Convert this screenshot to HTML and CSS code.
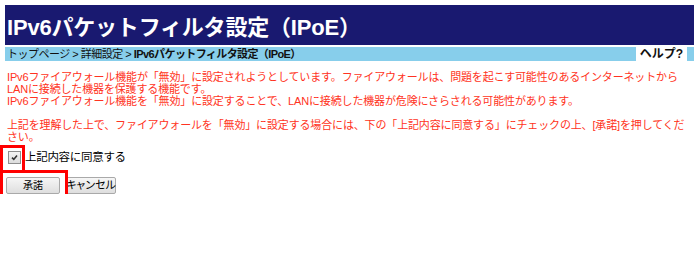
FILE: index.html
```html
<!DOCTYPE html>
<html lang="ja">
<head>
<meta charset="utf-8">
<title>IPv6パケットフィルタ設定（IPoE）</title>
<link rel="stylesheet" href="styles.css">
</head>
<body>
<div class="page">
  <div class="title">IPv6パケットフィルタ設定（IPoE）</div>
  <div class="crumbs">
    <span class="path">トップページ &gt; 詳細設定 &gt; <b>IPv6パケットフィルタ設定（IPoE）</b></span>
    <span class="help">ヘルプ?</span>
  </div>
  <div class="msg">
    <p>IPv6ファイアウォール機能が「無効」に設定されようとしています。ファイアウォールは、問題を起こす可能性のあるインターネットから<br>LANに接続した機器を保護する機能です。<br>IPv6ファイアウォール機能を「無効」に設定することで、LANに接続した機器が危険にさらされる可能性があります。</p>
    <p>上記を理解した上で、ファイアウォールを「無効」に設定する場合には、下の「上記内容に同意する」にチェックの上、[承諾]を押してくだ<br>さい。</p>
  </div>
  <div class="form">
    <label class="agree">
      <input class="cb-input" type="checkbox" checked>
      <span class="cb"><svg width="7" height="7" viewBox="0 0 7 7"><path d="M1 3.6 L2.8 5.4 L6 1.4" fill="none" stroke="#333" stroke-width="1.6"/></svg></span>
      <span class="agree-text">上記内容に同意する</span>
    </label>
    <div class="buttons">
      <button class="btn btn-ok" type="button">承諾</button>
      <button class="btn btn-cancel" type="button">キャンセル</button>
    </div>
  </div>
  <span class="mark mark-check"></span>
  <span class="mark mark-ok"></span>
</div>
</body>
</html>
```
FILE: styles.css
```css
html, body {
  margin: 0;
  background: #fff;
}
body {
  font-family: "Liberation Sans", "Noto Sans CJK JP", sans-serif;
  color: #000;
}
.page {
  position: relative;
  width: 689px;
  padding: 5px 0 0 5px;
}
.title {
  height: 40px;
  background: #191970;
  color: #fff;
  font-weight: bold;
  font-size: 22px;
  display: flex;
  align-items: center;
  padding-left: 2px;
  white-space: nowrap;
  letter-spacing: -0.2px;
}
.crumbs {
  margin-top: 2px;
  height: 14px;
  background: #87ceeb;
  display: flex;
  justify-content: space-between;
  font-size: 11px;
  line-height: 14px;
  padding: 0 7px 0 2px;
  white-space: nowrap;
  color: #111;
}
.path {
  letter-spacing: -0.5px;
}
.path b {
  font-weight: bold;
  letter-spacing: -0.6px;
}
.help {
  background: #fff;
  font-weight: bold;
  width: 51px;
  text-align: center;
  font-size: 12px;
}
.msg {
  margin-top: 10px;
  padding-left: 2px;
  color: #ff3322;
  font-size: 11px;
  line-height: 12px;
  letter-spacing: -0.15px;
  white-space: nowrap;
}
.msg p {
  margin: 0;
}
.msg p + p {
  margin-top: 12px;
}
.form {
  margin-top: 7px;
  font-size: 11.5px;
}
.agree {
  display: flex;
  align-items: center;
  height: 14px;
  padding-left: 3px;
}
.cb-input {
  position: absolute;
  opacity: 0;
  width: 0;
  height: 0;
  margin: 0;
}
.cb {
  width: 11px;
  height: 11px;
  border: 1px solid #8e8e8e;
  background: linear-gradient(#f4f4f4, #dcdcdc);
  display: flex;
  align-items: center;
  justify-content: center;
}
.agree-text {
  margin-left: 4px;
  line-height: 14px;
  letter-spacing: -0.3px;
}
.buttons {
  margin-top: 13px;
  display: flex;
  gap: 5px;
  padding-left: 1px;
}
.btn {
  height: 17px;
  padding: 0;
  margin: 0;
  border: 1px solid #a9a9a9;
  border-radius: 2px;
  background: linear-gradient(#f6f6f6, #dedede);
  font-family: "Liberation Sans", "Noto Sans CJK JP", sans-serif;
  font-size: 11px;
  line-height: 15px;
  color: #000;
  white-space: nowrap;
}
.btn-ok {
  width: 54px;
  font-size: 10px;
}
.btn-cancel {
  width: 51px;
  font-feature-settings: "palt";
  font-size: 11px;
}
.mark {
  position: absolute;
  box-sizing: border-box;
  border: 3px solid #f00;
}
.mark-check {
  left: 0;
  top: 145px;
  width: 25px;
  height: 28px;
}
.mark-ok {
  left: 0;
  top: 170px;
  width: 68px;
  height: 30px;
}
```
